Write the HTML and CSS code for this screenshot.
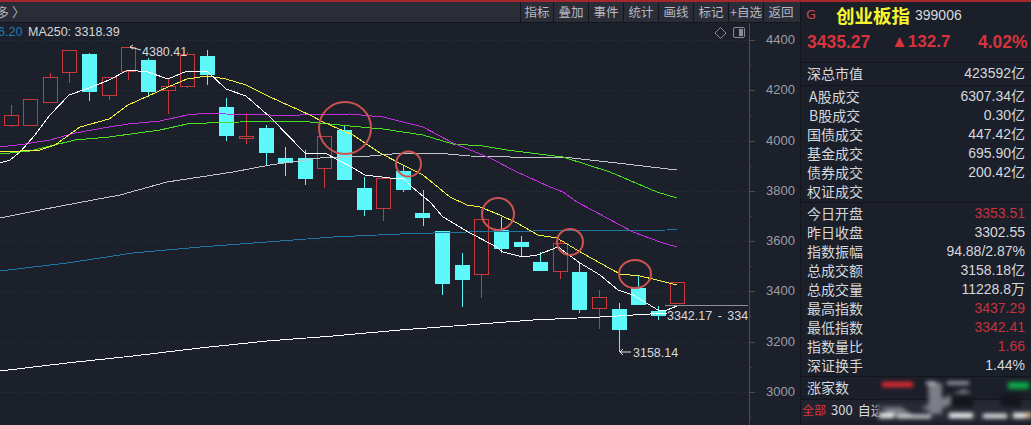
FILE: index.html
```html
<!DOCTYPE html>
<html lang="zh">
<head>
<meta charset="utf-8">
<title>创业板指 399006</title>
<link rel="stylesheet" href="styles.css">
</head>
<body>
<div class="app">
  <main class="main">
    <header class="topbar">
      <span class="crumb">多 〉</span>
      <nav class="tools">
        <button class="tool tool-first">指标</button>
        <button class="tool">叠加</button>
        <button class="tool">事件</button>
        <button class="tool">统计</button>
        <button class="tool">画线</button>
        <button class="tool">标记</button>
        <button class="tool">+自选</button>
        <button class="tool">返回</button>
      </nav>
    </header>
    <svg class="chart" viewBox="0 23 800 402" width="800" height="402">
      <path class="grid" d="M0 40.5H749M0 90.5H749M0 141.5H749M0 191.5H749M0 241.5H749M0 291.5H749M0 342.5H749M0 392.5H749"/>
      <path class="axis" d="M749.5 23V425"/>
      <path class="tick" d="M749 40.5h6M749 90.5h6M749 141.5h6M749 191.5h6M749 241.5h6M749 291.5h6M749 342.5h6M749 392.5h6"/>
      <path class="tick-minor" d="M749 65.5h3M749 115.5h3M749 166.5h3M749 216.5h3M749 266.5h3M749 316.5h3M749 367.5h3M749 417.5h3"/>
      <g class="axis-labels">
        <text x="766" y="44">4400</text>
        <text x="766" y="94">4200</text>
        <text x="766" y="145">4000</text>
        <text x="766" y="195">3800</text>
        <text x="766" y="245">3600</text>
        <text x="766" y="295">3400</text>
        <text x="766" y="346">3200</text>
        <text x="766" y="396">3000</text>
      </g>

      <path class="wick-up" d="M11.5 105V127M50.5 73V80M69.5 70V83M109.5 93V100M128.5 70V80M168.5 79V114M187.5 52V88M246.5 113V144M324.5 168V188M383.5 205V221M481.5 275V298M560.5 240V279M599.5 290V329"/>
      <path class="wick-dn" d="M89.5 53V101M148.5 58V97M207.5 50V85M226.5 98V141M266.5 125V165M285.5 147V176M305.5 150V185M344.5 126V180M364.5 177V216M403.5 165V192M423.5 190V226M442.5 284V295M462.5 253V307M501.5 217V253M521.5 236V256M540.5 252V271M579.5 263V313M619.5 303V352M638.5 275V305M658.5 306V320"/>

      <g class="up">
        <rect x="4.5" y="115.5" width="14" height="10"/>
        <rect x="23.5" y="99.5" width="14" height="26"/>
        <rect x="43.5" y="77.5" width="14" height="25"/>
        <rect x="62.5" y="50.5" width="14" height="22"/>
        <rect x="102.5" y="77.5" width="14" height="18"/>
        <rect x="121.5" y="47.5" width="14" height="24"/>
        <rect x="161.5" y="86.5" width="14" height="4"/>
        <rect x="180.5" y="54.5" width="14" height="32"/>
        <rect x="239.5" y="136.5" width="14" height="2"/>
        <rect x="317.5" y="136.5" width="14" height="32"/>
        <rect x="376.5" y="178.5" width="14" height="30"/>
        <rect x="474.5" y="219.5" width="14" height="55"/>
        <rect x="553.5" y="243.5" width="14" height="28"/>
        <rect x="592.5" y="297.5" width="14" height="11"/>
        <rect x="670.5" y="282.5" width="14" height="21"/>
      </g>
      <g class="dn">
        <rect x="82" y="54" width="15" height="38"/>
        <rect x="141" y="60" width="15" height="32"/>
        <rect x="200" y="56" width="15" height="19"/>
        <rect x="219" y="107" width="15" height="29"/>
        <rect x="259" y="128" width="15" height="25"/>
        <rect x="278" y="158" width="15" height="5"/>
        <rect x="298" y="158" width="15" height="21"/>
        <rect x="337" y="130" width="15" height="50"/>
        <rect x="357" y="188" width="15" height="22"/>
        <rect x="396" y="171" width="15" height="19"/>
        <rect x="415" y="213" width="15" height="5"/>
        <rect x="435" y="231" width="15" height="53"/>
        <rect x="455" y="265" width="15" height="15"/>
        <rect x="494" y="230" width="15" height="19"/>
        <rect x="514" y="242" width="15" height="5"/>
        <rect x="533" y="262" width="15" height="9"/>
        <rect x="572" y="272" width="15" height="38"/>
        <rect x="612" y="309" width="15" height="21"/>
        <rect x="631" y="288" width="15" height="17"/>
        <rect x="651" y="311" width="15" height="5"/>
      </g>

      <polyline class="ma ma-blue" points="0,271 67,263 133,253 200,247 267,242 333,237 400,234 467,232 533,231 600,230.500 667,230 677,229"/>
      <polyline class="ma ma-long" points="0,371 67,363 133,356 200,348 267,341 333,336 400,330 467,325 533,320 600,317 667,313"/>
      <polyline class="ma ma-gray" points="0,218 40,210 93,200 120,195 167,182 200,177 233,172 270,165 320,158 370,156 403,153 437,153 470,156 510,157 563,157 617,163 677,170"/>
      <polyline class="ma ma-green" points="0,154 30,151 50,146 75,140 109,137 160,130 187,124 207,123 240,122 270,121 310,122 350,126 383,129 423,135 453,144 483,146 507,150 563,157 610,172 657,192 677,198"/>
      <polyline class="ma ma-magenta" points="0,147 25,144 50,140 75,133 109,127 128,124 160,121 187,115 207,113 226,114 270,115 300,115 350,114 383,117 423,127 453,143 490,158 517,172 550,187 563,192 577,202 607,218 633,232 660,242 677,247"/>
      <polyline class="ma ma-yellow" points="0,151 20,151 40,150 55,145 80,127 109,119 128,105 148,96 168,87 187,79 207,76 226,79 246,85 270,97 310,115 323,122 353,135 380,153 403,165 423,175 450,197 467,205 480,207 500,215 517,223 538,235 557,238 577,250 600,263 620,274 640,276 657,280 677,285"/>
      <polyline class="ma ma-white" points="0,163 10,160 20,152 35,135 50,115 69,95 89,88 109,80 128,70 148,72 168,79 187,71 207,71 226,89 246,96 270,117 305,153 325,153 353,168 365,175 390,178 403,178 412,187 430,202 443,217 470,233 493,245 503,252 523,257 537,255 558,247 580,263 600,275 618,290 633,295 658,310 667,310 677,306"/>

      <g class="marks">
        <circle cx="345" cy="128" r="26"/>
        <circle cx="408.500" cy="164" r="12.500"/>
        <circle cx="498" cy="214" r="16"/>
        <circle cx="570" cy="242" r="13"/>
        <ellipse cx="635" cy="274" rx="16" ry="14"/>
      </g>

      <path class="hair" d="M665 305.500H748"/>
      <path class="pointer" d="M133 45l-3 2 3 2M130 47l11 3M623 349l-3 3 3 3M620 352h11"/>
      <g class="quote-labels">
        <text x="142" y="56">4380.41</text>
        <text x="633" y="357">3158.14</text>
        <svg x="0" y="23" width="748" height="402" viewBox="0 23 748 402">
          <text class="range" x="667" y="320">3342.17 - 3342.41</text>
        </svg>
        <text class="ma-value" x="-2" y="36">6.20</text>
        <text x="28" y="36">MA250: 3318.39</text>
      </g>
      <path class="tool-icon" d="M720.500 27.500l5.500 5.500-5.500 5.500-5.500-5.500z"/>
      <rect class="tool-icon" x="733.500" y="27.500" width="11" height="10" rx="1.500"/>
      <rect class="tool-icon-fill" x="739" y="29" width="4" height="7"/>
    </svg>
  </main>

  <aside class="panel">
    <div class="title-row">
      <span class="flag">G</span>
      <span class="name">创业板指</span>
      <span class="code">399006</span>
    </div>
    <div class="price-row">
      <span class="price-now">3435.27</span>
      <span class="price-diff">▲132.7</span>
      <span>4.02%</span>
    </div>
    <section class="block block-one">
      <div class="row"><span>深总市值</span><span>423592亿</span></div>
    </section>
    <section class="block">
      <div class="row"><span class="indent">A 股成交</span><span>6307.34亿</span></div>
      <div class="row"><span class="indent">B 股成交</span><span>0.30亿</span></div>
      <div class="row"><span>国债成交</span><span>447.42亿</span></div>
      <div class="row"><span>基金成交</span><span>695.90亿</span></div>
      <div class="row"><span>债券成交</span><span>200.42亿</span></div>
      <div class="row"><span>权证成交</span><span></span></div>
    </section>
    <section class="block">
      <div class="row"><span>今日开盘</span><span class="red">3353.51</span></div>
      <div class="row"><span>昨日收盘</span><span>3302.55</span></div>
      <div class="row"><span>指数振幅</span><span>94.88/2.87%</span></div>
      <div class="row"><span>总成交额</span><span>3158.18亿</span></div>
      <div class="row"><span>总成交量</span><span>11228.8万</span></div>
      <div class="row"><span>最高指数</span><span class="red">3437.29</span></div>
      <div class="row"><span>最低指数</span><span class="red">3342.41</span></div>
      <div class="row"><span>指数量比</span><span class="red">1.66</span></div>
      <div class="row"><span>深证换手</span><span>1.44%</span></div>
    </section>
    <section class="block block-rise">
      <div class="row"><span>涨家数</span><span></span></div>
    </section>
    <div class="tabs">
      <span class="tab-active">全部</span>
      <span>300</span>
      <span>自选</span>
    </div>
    <svg class="smudge" viewBox="0 0 231 45" width="231" height="45">
      <rect class="sm-dark" x="76" y="22" width="155" height="20"/>
      <path class="sm-gray" d="M127 3L141 3L141 34L128 34z"/>
      <path class="sm-gray" d="M163 9L173 15L132 32L120 28z"/>
      <path class="sm-gray" d="M78 27L100 27L115 37L95 37z"/>
      <rect class="sm-black" x="150" y="14" width="22" height="13"/>
      <rect class="sm-black" x="200" y="14" width="20" height="13"/>
      <rect class="sm-white" x="125" y="2" width="10" height="2"/>
      <rect class="sm-white" x="146" y="2" width="22" height="2"/>
      <rect class="sm-red" x="81" y="2" width="31" height="5"/>
      <rect class="sm-green" x="207" y="2" width="21" height="7"/>
      <rect class="sm-white" x="78" y="33" width="15" height="5"/>
      <rect class="sm-white" x="96" y="35" width="34" height="3"/>
      <rect class="sm-white" x="148" y="33" width="24" height="5"/>
      <rect class="sm-white" x="182" y="34" width="24" height="4"/>
      <rect class="sm-white" x="212" y="33" width="14" height="5"/>
      <rect class="sm-tan" x="225" y="32" width="6" height="6"/>
    </svg>
  </aside>
</div>
</body>
</html>
```

FILE: styles.css
```css
* { box-sizing: border-box; }
html, body { margin: 0; padding: 0; }
body {
  width: 1031px;
  height: 425px;
  overflow: hidden;
  background: #1c202b;
  font-family: "Liberation Sans", "Noto Sans CJK SC", sans-serif;
}
.app {
  display: flex;
  width: 1031px;
  height: 425px;
  border-top: 2px solid #a4272c;
}
.main {
  width: 801px;
  display: flex;
  flex-direction: column;
  border-right: 1px solid #12151c;
}
.topbar {
  height: 21px;
  flex: none;
  display: flex;
  justify-content: space-between;
  background: #2a2d38;
  border-bottom: 1px solid #14161d;
}
.crumb {
  margin-left: -4px;
  font-size: 13px;
  line-height: 19px;
  color: #aeb1b8;
  font-family: "Noto Sans CJK SC", sans-serif;
}
.tools { display: flex; }
.tool {
  width: 35px;
  height: 20px;
  padding: 0;
  background: #2a2d38;
  border: 0;
  border-left: 1px solid #14161d;
  color: #b6b9c0;
  font: 12.500px/20px "Noto Sans CJK SC", sans-serif;
  white-space: nowrap;
}
.tool-first { width: 33px; }
.tool:last-child { width: 37px; padding-right: 2px; }
.chart { display: block; flex: none; }
.grid { stroke: #2d313c; stroke-width: 1; stroke-dasharray: 1 2; fill: none; }
.axis { stroke: #4a4d56; fill: none; }
.tick { stroke: #4a4d56; fill: none; }
.tick-minor { stroke: #3a3d46; fill: none; }
.axis-labels text { fill: #9b9ea4; font-size: 13px; }
.wick-up { stroke: #c8393c; stroke-width: 1; fill: none; }
.wick-dn { stroke: #5cf5f7; stroke-width: 1; fill: none; }
.up rect { fill: #1c202b; stroke: #c8393c; stroke-width: 1; }
.dn rect { fill: #5cf8fa; }
.ma { fill: none; stroke-width: 1; shape-rendering: crispEdges; }
.ma-blue { stroke: #1d78a8; }
.ma-long { stroke: #ffffff; }
.ma-gray { stroke: #c4c4cc; }
.ma-green { stroke: #48e020; }
.ma-magenta { stroke: #c030dc; }
.ma-yellow { stroke: #f4f440; }
.ma-white { stroke: #ffffff; }
.marks circle, .marks ellipse { fill: none; stroke: #cb5350; stroke-width: 2; }
.hair { stroke: #8e9096; fill: none; }
.pointer { stroke: #e0e0e0; fill: none; }
.quote-labels text { fill: #d6d8da; font-size: 12.500px; }
.quote-labels .ma-value { fill: #1f7fb5; }
.quote-labels .range { word-spacing: 2px; }
.tool-icon { fill: none; stroke: #8a8d94; stroke-width: 1; }
.tool-icon-fill { fill: #8a8d94; }

.panel {
  position: relative;
  flex: 1;
  min-width: 0;
  overflow: hidden;
  display: flex;
  flex-direction: column;
  color: #d4d8dc;
  font-size: 14px;
  background: #1b1f2a;
}
.title-row {
  height: 28px;
  display: flex;
  align-items: center;
  padding-left: 5px;
  padding-bottom: 3px;
}
.flag { width: 30px; color: #c8484a; font: 13px "DejaVu Sans", sans-serif; }
.name {
  color: #f6f62c;
  font: 700 18.500px/24px "Noto Sans CJK SC", sans-serif;
  white-space: nowrap;
}
.code { margin-left: 5px; font-size: 14px; color: #d8dadc; }
.price-row {
  height: 33px;
  padding: 2px 0 11px 6px;
  display: flex;
  color: #d8333b;
  font-weight: 700;
  font-size: 17.500px;
  line-height: 20px;
  white-space: nowrap;
  border-bottom: 1px solid #12151c;
}
.price-now { width: 84px; }
.price-diff { width: 87px; font-size: 17px; }
.block {
  padding: 1px 0;
  border-bottom: 1px solid #12151c;
}
.block-one { padding: 1px 0 2px; }
.row {
  height: 19px;
  padding: 0 6px;
  display: flex;
  justify-content: space-between;
  line-height: 19px;
  white-space: nowrap;
}
.row span:first-child { font-family: "Noto Sans CJK SC", sans-serif; }
.indent { padding-left: 2px; word-spacing: -3px; }
.red { color: #c8333d; }
.block-rise { height: 23px; padding-top: 1px; }
.tabs {
  height: 20px;
  display: flex;
  gap: 5px;
  font-size: 13px;
  line-height: 20px;
  background: #20232e;
  font-family: "Noto Sans CJK SC", sans-serif;
}
.tab-active { color: #d8333b; font-size: 12px; padding-left: 1px; }
.smudge {
  position: absolute;
  left: 0;
  top: 378px;
  filter: blur(2px);
}
.sm-dark { fill: #272a35; }
.sm-gray { fill: #7d7f88; }
.sm-black { fill: #14161c; }
.sm-white { fill: #fff; }
.sm-red { fill: #f02a30; }
.sm-green { fill: #0eaa48; }
.sm-tan { fill: #c8a878; }
```
